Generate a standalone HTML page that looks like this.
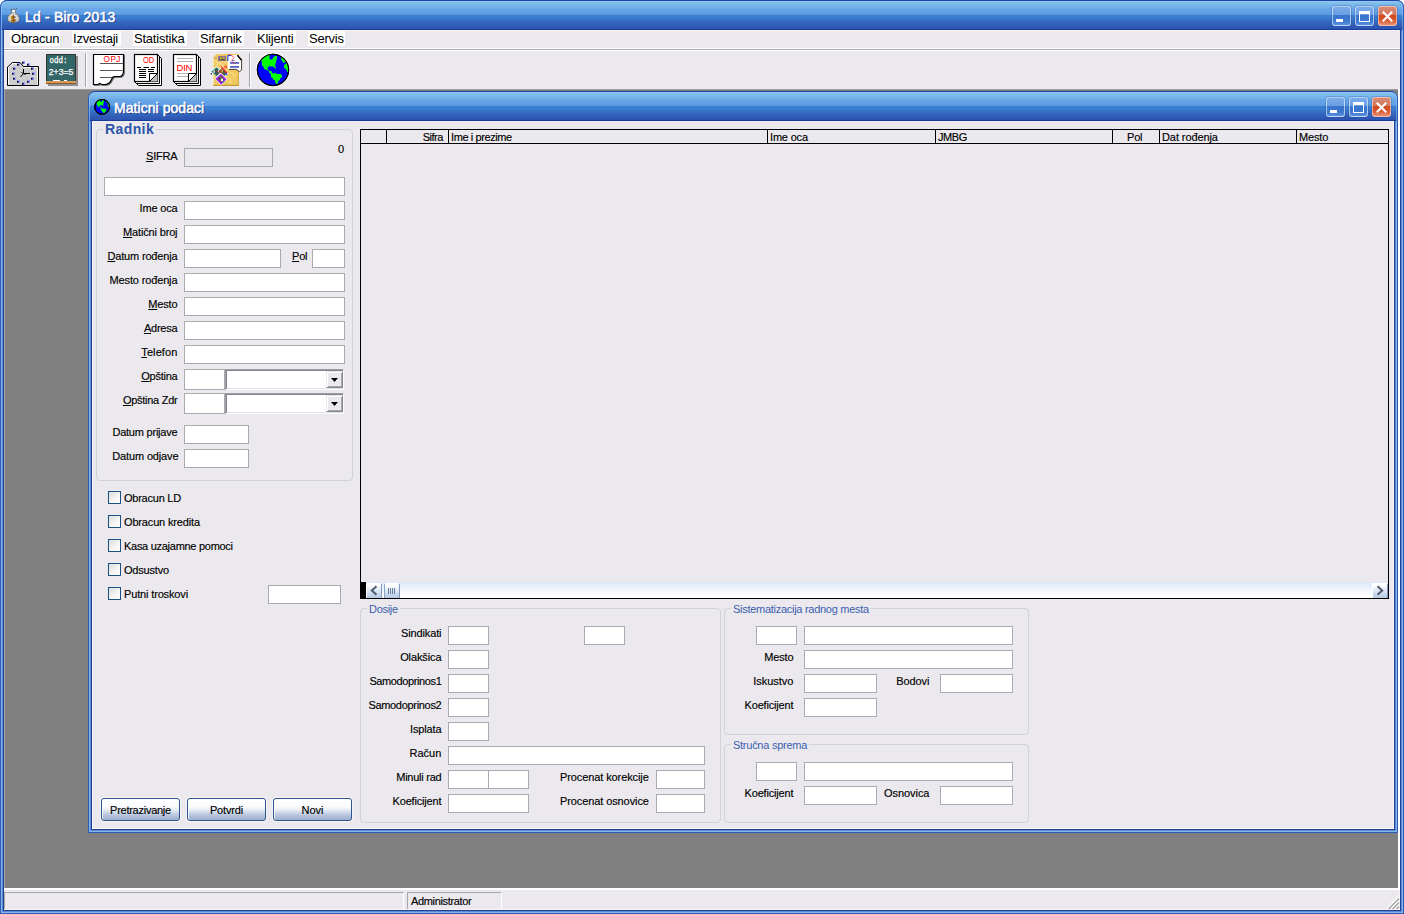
<!DOCTYPE html><html><head><meta charset="utf-8"><title>Ld - Biro 2013</title><style>
html,body{margin:0;padding:0;}
body{width:1404px;height:914px;overflow:hidden;position:relative;background:#fff;font-family:"Liberation Sans",sans-serif;font-size:11px;color:#000;}
div,span{position:absolute;box-sizing:border-box;white-space:nowrap;}
u{text-decoration:underline;}
.outer{left:0;top:0;width:1404px;height:914px;border-radius:7px 7px 0 0;overflow:hidden;background:#2c5bb8;}
.title{left:0;top:0;width:1404px;height:30px;background:linear-gradient(#1c3c9c 0px,#1c3c9c 1px,#9ccef4 1px,#84c2ee 2px,#7cbaea 4px,#74b2ea 7px,#66a6e8 9px,#62a2e6 12px,#5a98de 15px,#3a80d0 15px,#3a7cce 18px,#366ec4 21px,#3262ba 24px,#2e58b4 27px,#2a54b0 29px,#183c98 29px,#183c98 30px);border-radius:7px 7px 0 0;box-shadow:inset 1px 0 0 #2c5bb8,inset -1px 0 0 #2c5bb8,inset 0 1px 0 #1f43a4,inset 2px 0 0 rgba(160,208,248,.6),inset -2px 0 0 rgba(160,208,248,.45);}
.bl{width:1px;}

.tt{color:#fff;font-weight:normal;-webkit-text-stroke:0.55px #fff;font-size:14px;line-height:16px;letter-spacing:0.18px;text-shadow:1px 1px 0 #1a2f80;}
.inner{background:#ebe9ed;}
.lbl,.l,.hd,.btn{-webkit-text-stroke:0.15px #000;}
.lbl{height:13px;line-height:13px;font-size:11px;text-align:right;}
.l{height:13px;line-height:13px;font-size:11px;}
.in{background:#fff;border:1px solid #a9abb0;height:19px;}
.gb{border:1px solid #d2d1d3;border-radius:4px;}
.gl{background:#ebe9ed;color:#3c5eae;font-size:11px;line-height:13px;height:13px;padding:0 2px;}
.cb{width:13px;height:13px;border:1px solid #1c5180;background:linear-gradient(135deg,#dcdcd7,#f6f6f4 60%,#fff);}
.btn{height:23px;border:1px solid #2e5590;border-radius:3px;background:linear-gradient(#fff 0%,#fafbfd 35%,#e8ecf5 52%,#cdd7e8 65%,#b2c1db 80%,#9cb0d0 100%);box-shadow:0 0 0 1px rgba(255,255,255,.45),inset 1px 0 0 rgba(255,255,255,.8);text-align:center;line-height:21px;padding-top:1px;font-size:11px;}
.m{top:30px;height:16px;line-height:18px;font-size:13px;background:#fff;padding:0 1px;letter-spacing:-0.22px;overflow:hidden;}
.wb{width:19px;height:20px;border:1px solid rgba(235,245,255,.62);border-radius:3px;background:linear-gradient(#7cacea 0%,#6a9fe4 42%,#3a74cc 46%,#3c78d0 75%,#5a8fdc 100%);box-shadow:0 0 0 1px rgba(30,60,150,.22);}
.wc{border-color:rgba(255,225,215,.6);background:linear-gradient(#d88a74 0%,#d27a60 42%,#d04a1e 46%,#d8542a 70%,#e89274 100%);}
.hd{top:131px;height:12px;line-height:12px;font-size:11px;}
.vs{top:130px;width:1px;height:13px;background:#000;}
</style></head><body>
<div class="outer">
<div class="title"></div>
<svg width="30" height="30" style="position:absolute;left:0;top:0"><path d="M10.5 9 L12.5 11 L11.5 13 Q7.5 15.5 7.5 19 Q7.5 22.5 13.5 22.5 Q19.5 22.5 19.5 19 Q19.5 15.5 15.5 13 L14.8 11 L16.5 8.5 L14 10 L13 9 L12 10 Z" fill="#c8c8c8" stroke="#5a4a3a" stroke-width="0.9" stroke-dasharray="1.2,0.8"/><ellipse cx="13.5" cy="18" rx="3.4" ry="3.6" fill="#e8e8e8"/><rect x="12.4" y="10" width="2.4" height="2" fill="#fff"/><text x="11" y="21.6" font-family="Liberation Sans,sans-serif" font-weight="bold" font-size="8.5" fill="#f0c000" stroke="#7a3a00" stroke-width="0.5">$</text></svg>
<div class="tt" style="left:25px;top:9px;">Ld - Biro 2013</div>
<div class="wb" style="left:1332px;top:6px;"><svg width="17" height="18" style="position:absolute;left:0;top:0"><rect x="3" y="12" width="7" height="3" fill="#fff"/></svg></div><div class="wb" style="left:1355px;top:6px;"><svg width="17" height="18" style="position:absolute;left:0;top:0"><rect x="3.5" y="4.5" width="10" height="10" fill="none" stroke="#fff" stroke-width="1"/><rect x="3" y="4" width="11" height="3" fill="#fff"/></svg></div><div class="wb wc" style="left:1378px;top:6px;"><svg width="17" height="18" style="position:absolute;left:0;top:0"><path d="M3.8 4.8 L13.2 14.2 M13.2 4.8 L3.8 14.2" stroke="#fff" stroke-width="2.1" fill="none"/></svg></div>
<div style="left:4px;top:30px;width:1396px;height:880px;background:#ebe9ed;"></div>
<div style="left:0px;top:30px;width:1px;height:884px;background:#2c5bb8;"></div><div style="left:1403px;top:30px;width:1px;height:884px;background:#2c5bb8;"></div><div style="left:0px;top:913px;width:1404px;height:1px;background:#2c5bb8;"></div><div style="left:1px;top:30px;width:1px;height:883px;background:#86b5e6;"></div><div style="left:1402px;top:30px;width:1px;height:883px;background:#86b5e6;"></div><div style="left:1px;top:912px;width:1402px;height:1px;background:#86b5e6;"></div><div style="left:2px;top:30px;width:1px;height:882px;background:#5a8ad4;"></div><div style="left:1401px;top:30px;width:1px;height:882px;background:#5a8ad4;"></div><div style="left:2px;top:911px;width:1400px;height:1px;background:#5a8ad4;"></div><div style="left:3px;top:30px;width:1px;height:881px;background:#223f96;"></div><div style="left:1400px;top:30px;width:1px;height:881px;background:#223f96;"></div><div style="left:3px;top:910px;width:1398px;height:1px;background:#223f96;"></div>
<div class="m" style="left:10px;width:50px;">Obracun</div>
<div class="m" style="left:72px;width:49px;">Izvestaji</div>
<div class="m" style="left:133px;width:54px;">Statistika</div>
<div class="m" style="left:199px;width:45px;">Sifarnik</div>
<div class="m" style="left:256px;width:40px;">Klijenti</div>
<div class="m" style="left:308px;width:37px;">Servis</div>
<div style="left:4px;top:30px;width:1396px;height:1px;background:#f7f3f4;"></div>
<div style="left:4px;top:48px;width:1396px;height:1px;background:#fff;"></div>
<div style="left:4px;top:49px;width:1396px;height:1px;background:#a7a6aa;"></div>
<div style="left:4px;top:50px;width:1396px;height:1px;background:#fff;"></div>
<svg width="400" height="90" style="position:absolute;left:0;top:0"><polygon points="7.5,85.5 7.5,67 12.5,62.5 20,62.5 23.5,66.5 38.5,66.5 38.5,85.5" fill="#cdcdcd" stroke="#000" stroke-width="1"/><path d="M8.5 84.5 V67.5 L13 63.5 H19.5" fill="none" stroke="#fff" stroke-width="1"/><path d="M24 67.5 H37.5" stroke="#fff" stroke-width="1"/><path d="M37.5 68 V84.5" stroke="#f4f4e2" stroke-width="1"/><rect x="22" y="61" width="3" height="3" fill="#9c9cff"/><rect x="22" y="62" width="1.6" height="1.6" fill="#000"/><rect x="27" y="63" width="3" height="3" fill="#9c9cff"/><rect x="27" y="64" width="1.6" height="1.6" fill="#000"/><rect x="31" y="67" width="3" height="3" fill="#9c9cff"/><rect x="31" y="68" width="1.6" height="1.6" fill="#000"/><rect x="32" y="72" width="3" height="3" fill="#9c9cff"/><rect x="32" y="73" width="1.6" height="1.6" fill="#000"/><rect x="31" y="77" width="3" height="3" fill="#9c9cff"/><rect x="31" y="78" width="1.6" height="1.6" fill="#000"/><rect x="27" y="80" width="3" height="3" fill="#9c9cff"/><rect x="27" y="81" width="1.6" height="1.6" fill="#000"/><rect x="22" y="82" width="3" height="3" fill="#9c9cff"/><rect x="22" y="83" width="1.6" height="1.6" fill="#000"/><rect x="17" y="80" width="3" height="3" fill="#9c9cff"/><rect x="17" y="81" width="1.6" height="1.6" fill="#000"/><rect x="13" y="77" width="3" height="3" fill="#9c9cff"/><rect x="13" y="78" width="1.6" height="1.6" fill="#000"/><rect x="12" y="72" width="3" height="3" fill="#9c9cff"/><rect x="12" y="73" width="1.6" height="1.6" fill="#000"/><rect x="13" y="67" width="3" height="3" fill="#9c9cff"/><rect x="13" y="68" width="1.6" height="1.6" fill="#000"/><rect x="17" y="63" width="3" height="3" fill="#9c9cff"/><rect x="17" y="64" width="1.6" height="1.6" fill="#000"/><path d="M23.5 73.5 H30 M23.5 73.5 L20.5 77 M23.5 73.5 V69 M21.5 72.5 L25.5 74.5" stroke="#000" stroke-width="1" fill="none"/><rect x="48" y="56" width="30" height="30" fill="#8f8f8f"/><rect x="46.5" y="54.5" width="29" height="29" fill="#336666" stroke="#333" stroke-width="1"/><rect x="46" y="81" width="30" height="2" fill="#d89a58"/><rect x="46" y="83" width="30" height="1" fill="#8a5a2a"/><rect x="53" y="80" width="7" height="1" fill="#fff"/><rect x="64" y="80" width="3" height="1" fill="#fff"/><text x="49.5" y="62.5" font-family="Liberation Mono,monospace" font-size="8.5" fill="#fff" stroke="#fff" stroke-width="0.25" textLength="18" lengthAdjust="spacingAndGlyphs">odd:</text><text x="48.8" y="74.6" font-family="Liberation Sans,sans-serif" font-size="9" fill="#fff" stroke="#fff" stroke-width="0.25" textLength="24.5" lengthAdjust="spacingAndGlyphs">2+3=5</text><rect x="85" y="53" width="1" height="34" fill="#a3a2a6"/><rect x="86" y="53" width="1" height="34" fill="#fff"/><rect x="249" y="53" width="1" height="34" fill="#a3a2a6"/><rect x="250" y="53" width="1" height="34" fill="#fff"/><path d="M93.5 54.5 H123.5 V71 Q123.5 76 119.5 76.5 H114.5 Q112.5 76.5 111.5 79.5 Q109.5 84.5 105 84.5 H102 L99.5 83.5 L98 84.5 H93.5 Z" fill="#777" stroke="#777" stroke-width="1.2" transform="translate(0.9,0.9)"/><path d="M93.5 54.5 H123.5 V71 Q123.5 76 119.5 76.5 H114.5 Q112.5 76.5 111.5 79.5 Q109.5 84.5 105 84.5 H102 L99.5 83.5 L98 84.5 H93.5 Z" fill="#fff" stroke="#000" stroke-width="1.2"/><path d="M100 63.5 H123 M100 70.5 H122.5 M100 77.5 H112" stroke="#555" stroke-width="1"/><text x="103.6" y="62.2" font-family="Liberation Sans,sans-serif" font-size="8.2" fill="#ff0000" textLength="16.8" lengthAdjust="spacing">OPJ</text><path d="M157.5 54.5 L161.5 58.5 V85.5 H138.5 L134.5 81.5" fill="#fff" stroke="#000" stroke-width="1"/><path d="M159.5 56.5 V83.5 H136.5" fill="none" stroke="#000" stroke-width="1"/><rect x="134.5" y="54.5" width="23.0" height="27" fill="#fff" stroke="#000" stroke-width="1.2"/><polygon points="149.5,81.5 157.5,73.5 157.5,81.5" fill="#c0c0c0"/><path d="M149.5 81.5 V73.5 H157.5 M149.5 81.5 L157.5 73.5" fill="none" stroke="#000" stroke-width="1"/><text x="143" y="63" font-family="Liberation Sans,sans-serif" font-size="8.2" fill="#ff0000" textLength="11.2" lengthAdjust="spacingAndGlyphs">OD</text><path d="M137 67.5 H141 M143.5 67.5 H149 M151 67.5 H155" stroke="#000" stroke-width="1"/><path d="M139 69.5 H146 M139 71.5 H146 M139 73.5 H146 M139 75.5 H146 M139 77.5 H146 M148 69.5 H154 M148 71.5 H154" stroke="#000" stroke-width="1"/><path d="M196.5 54.5 L200.5 58.5 V85.5 H177.5 L173.5 81.5" fill="#fff" stroke="#000" stroke-width="1"/><path d="M198.5 56.5 V83.5 H175.5" fill="none" stroke="#000" stroke-width="1"/><rect x="173.5" y="54.5" width="23.0" height="27" fill="#fff" stroke="#000" stroke-width="1.2"/><polygon points="188.5,81.5 196.5,73.5 196.5,81.5" fill="#c0c0c0"/><path d="M188.5 81.5 V73.5 H196.5 M188.5 81.5 L196.5 73.5" fill="none" stroke="#000" stroke-width="1"/><path d="M177 58.5 H193 M177 61.5 H193 M177 73.5 H188 M177 76.5 H188" stroke="#b4b4b4" stroke-width="1"/><text x="176.6" y="70.6" font-family="Liberation Sans,sans-serif" font-size="9.6" fill="#ff0000" textLength="15.8" lengthAdjust="spacing">DIN</text><path d="M213 57.5 L216.5 54 H238.9 V86 H213 Z" fill="#f0c862"/><path d="M213 85.4 H238.9" stroke="#c49a38" stroke-width="1.2"/><path d="M238.4 71 V86" stroke="#d4a844" stroke-width="1"/><path d="M213.5 58 V85" stroke="#f8e6a0" stroke-width="1"/><path d="M215 60.5 L219 64 L223 60.5 L227 64 M216 66 L220 62.5 L224 66" stroke="#f6dc88" stroke-width="1.2" fill="none"/><path d="M226 76 h2 v2 h2 v2 h2 M230 73 h3 v3 h3 M228 82 h4" stroke="#f8e07c" stroke-width="1" fill="none"/><rect x="214.5" y="57.5" width="2.5" height="1" fill="#b09a70"/><rect x="218" y="56" width="8" height="5" fill="#9070a4"/><rect x="219.5" y="57" width="5.5" height="3.4" fill="#5a5230"/><rect x="220" y="57.3" width="1.6" height="2" fill="#e8d020"/><rect x="222.5" y="57.3" width="2.2" height="1.4" fill="#f0e060"/><path d="M227.8 55 H237.2 L241.6 60.2 V70 L239.5 71.6 L236 69.2 H227.8 Z" fill="#fff"/><path d="M237.2 55 L241.6 60.2 V70 L239.5 71.6 L236 69.4 H229" fill="none" stroke="#4a3c28" stroke-width="1"/><path d="M237.4 55.2 L241.6 60.2" stroke="#000" stroke-width="1.4"/><path d="M227.5 55.5 H231.5 M227.8 55.5 V61" stroke="#2050e0" stroke-width="1.2" fill="none"/><rect x="230" y="62" width="9" height="1.8" fill="#5464c4"/><rect x="230" y="66" width="9" height="1.8" fill="#5464c4"/><rect x="232" y="60" width="2.6" height="0.9" fill="#5464c4"/><path d="M228.5 54.2 L231.5 55.4 L234.4 57.4 L231.3 60.6 L233.4 62.8 L235.4 63.4" stroke="#ff2020" stroke-width="0.9" fill="none" stroke-dasharray="1.4,0.5"/><polygon points="210.6,71.2 216.5,66.2 222.2,71.2 216.5,76.6" fill="#fff"/><polygon points="211.4,71.6 216.6,67.2 221.5,71.6 216.6,76.2" fill="#1c7a74"/><polygon points="213.8,71.6 216.8,69.2 219.6,71.8 216.8,74.6" fill="#584a3c"/><rect x="213.4" y="70.2" width="1.6" height="2.6" fill="#d8d8d0"/><rect x="210.8" y="73.2" width="1.2" height="1.2" fill="#000"/><polygon points="217.6,71 222.4,66.2 228.6,73.2 224,77.6" fill="#fff"/><polygon points="218.6,71.2 222.4,67.4 227.4,73.2 223.8,76.6" fill="#6a5a38"/><path d="M221.2 66.6 L227.2 73.2" stroke="#ff2020" stroke-width="1.3"/><circle cx="225.6" cy="67" r="1.1" fill="none" stroke="#ff2020" stroke-width="0.8"/><rect x="225.2" y="73.4" width="2" height="1.8" fill="#2060f0"/><rect x="219.4" y="70.4" width="1.2" height="2.4" fill="#d02020"/><rect x="221.6" y="69.4" width="1.2" height="3" fill="#e0c040"/><rect x="223.4" y="71" width="1.2" height="3" fill="#2a6a50"/><polygon points="214.6,78.6 220.8,72.8 227.6,79.2 221.2,85.6" fill="#fff"/><polygon points="215.4,78.8 220.8,73.8 226.6,79.2 221.2,84.8" fill="#a020f0"/><polygon points="217.8,78.8 221,75.8 224.6,79.4 221.2,82.6" fill="#4c4638"/><rect x="220.8" y="78.6" width="2.2" height="2.6" fill="#fff"/><rect x="223" y="81.4" width="1.4" height="1.4" fill="#20d060"/><rect x="219.6" y="76.6" width="1.6" height="1.2" fill="#8a7a50"/><circle cx="273.0" cy="69.9" r="17.1" fill="#fff"/><circle cx="273.0" cy="69.9" r="15.7" fill="#0000ff" stroke="#000" stroke-width="1"/><polygon points="260.8,60.9 265.0,56.6 269.2,54.6 269.8,55.7 269.2,57.9 270.3,59.6 272.4,59.4 273.1,57.4 275.1,56.1 277.0,55.9 277.0,58.8 276.2,60.5 275.9,63.1 275.2,64.4 275.2,66.8 276.2,67.7 275.6,68.8 274.2,67.5 272.4,66.2 270.7,66.8 269.4,65.3 269.2,67.1 267.2,67.3 268.1,68.8 267.9,70.1 270.3,71.0 272.0,71.4 272.0,72.8 273.3,73.6 275.5,73.0 277.3,73.9 280.8,73.9 282.1,75.8 281.9,77.6 280.3,78.0 279.9,79.8 277.9,81.5 277.7,83.7 276.4,83.9 275.1,81.9 275.1,80.2 273.1,79.8 272.9,78.0 271.1,77.6 270.9,73.9 269.2,72.8 268.9,71.0 266.8,70.1 263.9,68.8 263.7,67.1 261.9,65.3 261.9,61.4" fill="#00ff00"/><polygon points="281.0,57.0 283.6,59.0 286.2,61.6 285.1,62.3 283.4,62.9 282.1,60.9 281.2,59.6" fill="#00ff00"/><polygon points="286.7,63.1 287.8,64.4 288.1,71.9 287.1,71.9 286.7,70.1 284.0,67.5 284.0,65.3 285.6,64.0" fill="#00ff00"/><circle cx="273.0" cy="69.9" r="15.7" fill="none" stroke="#000" stroke-width="1.1"/></svg>
<div style="left:4px;top:89px;width:1394px;height:799px;background:#808080;border-left:1px solid #a8a8a8;border-top:1px solid #9c9c9c;"></div>
<div style="left:1398px;top:89px;width:2px;height:801px;background:#fff;"></div>
<div style="left:4px;top:888px;width:1396px;height:2px;background:#fff;"></div>
<div style="left:4px;top:890px;width:1395px;height:20px;background:#ebe9ed;"></div>
<div style="left:1399px;top:890px;width:1px;height:20px;background:#fbf6f4;"></div>
<div style="left:4px;top:909px;width:1396px;height:1px;background:#fbf6f4;"></div>
<div style="left:4px;top:892px;width:400px;height:17px;border-top:1px solid #a7a6aa;border-left:1px solid #a7a6aa;border-right:1px solid #fff;"></div>
<div style="left:407px;top:892px;width:95px;height:17px;border-top:1px solid #a7a6aa;border-left:1px solid #a7a6aa;border-right:1px solid #fff;"></div>
<div class="l" style="left:411px;top:895px;letter-spacing:-0.35px;">Administrator</div>
<svg width="14" height="14" style="position:absolute;left:1386px;top:896px"><path d="M1.3 12.3 L12.3 1.3 M5.5 12.3 L12.3 5.5 M9.5 12.3 L12.3 9.5" stroke="#fff" stroke-width="1.4" fill="none"/><path d="M2.5 13 L13 2.5 M6.6 13 L13 6.6 M10.6 13 L13 10.6" stroke="#a3a2a6" stroke-width="1.4" fill="none"/></svg>
<div style="left:88px;top:91px;width:1310px;height:30px;border-radius:7px 7px 0 0;overflow:hidden;"><div class="title" style="width:1310px;"></div></div>
<div style="left:92px;top:121px;width:1302px;height:708px;background:#ebe9ed;border:1px solid #fbf8f6;border-top:none;"></div>
<div style="left:88px;top:121px;width:1px;height:712px;background:#2c5bb8;"></div><div style="left:1397px;top:121px;width:1px;height:712px;background:#2c5bb8;"></div><div style="left:88px;top:832px;width:1310px;height:1px;background:#2c5bb8;"></div><div style="left:89px;top:121px;width:1px;height:711px;background:#86b5e6;"></div><div style="left:1396px;top:121px;width:1px;height:711px;background:#86b5e6;"></div><div style="left:89px;top:831px;width:1308px;height:1px;background:#86b5e6;"></div><div style="left:90px;top:121px;width:1px;height:710px;background:#5a8ad4;"></div><div style="left:1395px;top:121px;width:1px;height:710px;background:#5a8ad4;"></div><div style="left:90px;top:830px;width:1306px;height:1px;background:#5a8ad4;"></div><div style="left:91px;top:121px;width:1px;height:709px;background:#223f96;"></div><div style="left:1394px;top:121px;width:1px;height:709px;background:#223f96;"></div><div style="left:91px;top:829px;width:1304px;height:1px;background:#223f96;"></div>
<svg width="30" height="30" style="position:absolute;left:88px;top:91px"><circle cx="14.1" cy="15.9" r="7.4" fill="#0000ff" stroke="#000" stroke-width="1"/><polygon points="8.2,11.5 10.2,9.4 12.2,8.4 12.5,9.0 12.2,10.0 12.8,10.9 13.8,10.8 14.2,9.8 15.1,9.2 16.1,9.1 16.1,10.5 15.6,11.3 15.5,12.6 15.2,13.2 15.2,14.4 15.6,14.8 15.4,15.4 14.7,14.7 13.8,14.1 13.0,14.4 12.3,13.7 12.2,14.5 11.3,14.6 11.7,15.4 11.6,16.0 12.8,16.4 13.6,16.7 13.6,17.3 14.3,17.7 15.3,17.4 16.2,17.8 17.9,17.8 18.5,18.8 18.4,19.6 17.7,19.9 17.5,20.7 16.5,21.6 16.4,22.6 15.8,22.7 15.1,21.8 15.1,20.9 14.2,20.7 14.0,19.9 13.2,19.6 13.1,17.8 12.2,17.3 12.1,16.4 11.1,16.0 9.7,15.4 9.6,14.5 8.7,13.7 8.7,11.7" fill="#00ff00"/><polygon points="18.0,9.6 19.3,10.6 20.6,11.9 20.0,12.2 19.2,12.5 18.5,11.5 18.1,10.9" fill="#00ff00"/><polygon points="20.8,12.6 21.3,13.2 21.5,16.9 21.0,16.9 20.8,16.0 19.5,14.7 19.5,13.7 20.2,13.0" fill="#00ff00"/><circle cx="14.1" cy="15.9" r="7.4" fill="none" stroke="#000" stroke-width="1.1"/></svg>
<div class="tt" style="left:114px;top:100px;letter-spacing:0.05px;">Maticni podaci</div>
<div class="wb" style="left:1326px;top:97px;"><svg width="17" height="18" style="position:absolute;left:0;top:0"><rect x="3" y="12" width="7" height="3" fill="#fff"/></svg></div><div class="wb" style="left:1349px;top:97px;"><svg width="17" height="18" style="position:absolute;left:0;top:0"><rect x="3.5" y="4.5" width="10" height="10" fill="none" stroke="#fff" stroke-width="1"/><rect x="3" y="4" width="11" height="3" fill="#fff"/></svg></div><div class="wb wc" style="left:1372px;top:97px;"><svg width="17" height="18" style="position:absolute;left:0;top:0"><path d="M3.8 4.8 L13.2 14.2 M13.2 4.8 L3.8 14.2" stroke="#fff" stroke-width="2.1" fill="none"/></svg></div>
<div class="gb" style="left:96px;top:129px;width:257px;height:352px;"></div>
<div style="left:103px;top:121px;height:16px;line-height:16px;font-size:14px;font-weight:bold;letter-spacing:0.4px;color:#2c54a8;background:#ebe9ed;padding:0 2px;">Radnik</div>
<div class="lbl" style="right:1226.6px;top:150px;letter-spacing:-0.22px;"><u>S</u>IFRA</div>
<div class="in" style="left:184px;top:148px;width:89px;height:19px;background:#ebe9ed;"></div>
<div class="l" style="left:338px;top:143px;letter-spacing:-0.15px;">0</div>
<div class="in" style="left:104px;top:177px;width:241px;height:19px;"></div>
<div class="lbl" style="right:1226.6px;top:202px;letter-spacing:-0.18px;">Ime oca</div>
<div class="lbl" style="right:1226.6px;top:226px;letter-spacing:-0.16px;"><u>M</u>atični broj</div>
<div class="lbl" style="right:1226.6px;top:250px;letter-spacing:-0.17px;"><u>D</u>atum rođenja</div>
<div class="lbl" style="right:1226.6px;top:274px;letter-spacing:-0.14px;">Mesto rođenja</div>
<div class="lbl" style="right:1226.6px;top:298px;letter-spacing:-0.17px;"><u>M</u>esto</div>
<div class="lbl" style="right:1226.6px;top:322px;letter-spacing:-0.23px;"><u>A</u>dresa</div>
<div class="lbl" style="right:1226.6px;top:346px;letter-spacing:0.09px;"><u>T</u>elefon</div>
<div class="lbl" style="right:1226.6px;top:370px;letter-spacing:-0.26px;"><u>O</u>pština</div>
<div class="lbl" style="right:1226.6px;top:394px;letter-spacing:-0.27px;"><u>O</u>pština Zdr</div>
<div class="in" style="left:184px;top:201px;width:161px;height:19px;"></div>
<div class="in" style="left:184px;top:225px;width:161px;height:19px;"></div>
<div class="in" style="left:184px;top:273px;width:161px;height:19px;"></div>
<div class="in" style="left:184px;top:297px;width:161px;height:19px;"></div>
<div class="in" style="left:184px;top:321px;width:161px;height:19px;"></div>
<div class="in" style="left:184px;top:345px;width:161px;height:19px;"></div>
<div class="in" style="left:184px;top:249px;width:97px;height:19px;"></div>
<div class="l" style="left:292px;top:250px;letter-spacing:-0.20px;"><u>P</u>ol</div>
<div class="in" style="left:312px;top:249px;width:33px;height:19px;"></div>
<div class="in" style="left:184px;top:369px;width:41px;height:21px;"></div>
<div style="left:225px;top:369px;width:119px;height:21px;background:#fff;border-top:1px solid #9c9ca4;border-left:1px solid #9c9ca4;border-right:1px solid #fff;border-bottom:1px solid #fff;box-shadow:inset 1px 1px 0 #85858d,inset 0 -1px 0 #dde3ea;"></div><div style="left:326px;top:371px;width:17px;height:17px;background:#ebe9ed;border-top:1px solid #e4e8ee;border-left:1px solid #e4e8ee;border-right:1px solid #85858d;border-bottom:1px solid #85858d;box-shadow:inset 1px 1px 0 #fff,inset -1px -1px 0 #a8a8b0;"></div><svg width="9" height="6" style="position:absolute;left:331px;top:378px"><polygon points="0,0 7,0 3.5,4" fill="#000"/></svg>
<div class="in" style="left:184px;top:393px;width:41px;height:21px;"></div>
<div style="left:225px;top:393px;width:119px;height:21px;background:#fff;border-top:1px solid #9c9ca4;border-left:1px solid #9c9ca4;border-right:1px solid #fff;border-bottom:1px solid #fff;box-shadow:inset 1px 1px 0 #85858d,inset 0 -1px 0 #dde3ea;"></div><div style="left:326px;top:395px;width:17px;height:17px;background:#ebe9ed;border-top:1px solid #e4e8ee;border-left:1px solid #e4e8ee;border-right:1px solid #85858d;border-bottom:1px solid #85858d;box-shadow:inset 1px 1px 0 #fff,inset -1px -1px 0 #a8a8b0;"></div><svg width="9" height="6" style="position:absolute;left:331px;top:402px"><polygon points="0,0 7,0 3.5,4" fill="#000"/></svg>
<div class="lbl" style="right:1226.6px;top:426px;letter-spacing:-0.22px;">Datum prijave</div>
<div class="lbl" style="right:1225.6px;top:450px;letter-spacing:-0.15px;">Datum odjave</div>
<div class="in" style="left:184px;top:425px;width:65px;height:19px;"></div>
<div class="in" style="left:184px;top:449px;width:65px;height:19px;"></div>
<div class="cb" style="left:108px;top:491px;"></div>
<div class="l" style="left:124px;top:492px;letter-spacing:-0.24px;">Obracun LD</div>
<div class="cb" style="left:108px;top:515px;"></div>
<div class="l" style="left:124px;top:516px;letter-spacing:-0.16px;">Obracun kredita</div>
<div class="cb" style="left:108px;top:539px;"></div>
<div class="l" style="left:124px;top:540px;letter-spacing:-0.28px;">Kasa uzajamne pomoci</div>
<div class="cb" style="left:108px;top:563px;"></div>
<div class="l" style="left:124px;top:564px;letter-spacing:-0.20px;">Odsustvo</div>
<div class="cb" style="left:108px;top:587px;"></div>
<div class="l" style="left:124px;top:588px;letter-spacing:-0.15px;">Putni troskovi</div>
<div class="in" style="left:268px;top:585px;width:73px;height:19px;"></div>
<div class="btn" style="left:101px;top:798px;width:79px;letter-spacing:-0.26px;">Pretrazivanje</div>
<div class="btn" style="left:187px;top:798px;width:79px;letter-spacing:-0.15px;">Potvrdi</div>
<div class="btn" style="left:273px;top:798px;width:79px;letter-spacing:0.00px;">Novi</div>
<div style="left:360px;top:129px;width:1029px;height:470px;border:1px solid #000;"></div>
<div style="left:361px;top:143px;width:1027px;height:1px;background:#000;"></div>
<div class="vs" style="left:386px;"></div>
<div class="vs" style="left:448px;"></div>
<div class="vs" style="left:767px;"></div>
<div class="vs" style="left:935px;"></div>
<div class="vs" style="left:1112px;"></div>
<div class="vs" style="left:1159px;"></div>
<div class="vs" style="left:1296px;"></div>
<div class="hd" style="right:961px;letter-spacing:-0.45px;">Sifra</div>
<div class="hd" style="left:451px;letter-spacing:-0.40px;">Ime i prezime</div>
<div class="hd" style="left:770px;letter-spacing:-0.18px;">Ime oca</div>
<div class="hd" style="left:938px;letter-spacing:-0.44px;">JMBG</div>
<div class="hd" style="left:1127px;letter-spacing:-0.20px;">Pol</div>
<div class="hd" style="left:1162px;letter-spacing:-0.09px;">Dat rođenja</div>
<div class="hd" style="left:1299px;letter-spacing:-0.17px;">Mesto</div>
<div style="left:361px;top:582px;width:1027px;height:16px;background:linear-gradient(#dbe8fa,#eef4fd 45%,#fff 90%);"></div>
<div style="left:360px;top:582px;width:6px;height:17px;background:#000;"></div>
<div style="left:366px;top:583px;width:16px;height:15px;border:1px solid #fff;border-right:1px solid #8196b8;border-bottom:none;border-radius:2px 2px 0 0;background:linear-gradient(#fff 10%,#dfe8f5 45%,#b6c9e3 100%);"></div>
<div style="left:1372px;top:583px;width:16px;height:15px;border:1px solid #fff;border-right:1px solid #8196b8;border-bottom:none;border-radius:2px 2px 0 0;background:linear-gradient(#fff 10%,#dfe8f5 45%,#b6c9e3 100%);"></div>
<svg width="16" height="16" style="position:absolute;left:366px;top:582px"><path d="M10.5 4.2 L5.8 8.5 L10.5 12.8" fill="none" stroke="#4d5d70" stroke-width="2"/></svg>
<svg width="16" height="16" style="position:absolute;left:1372px;top:582px"><path d="M5.5 4.2 L10.2 8.5 L5.5 12.8" fill="none" stroke="#4d5d70" stroke-width="2"/></svg>
<div style="left:384px;top:583px;width:16px;height:15px;border:1px solid #fff;border-right:1px solid #8196b8;border-left:1px solid #8fa3c2;border-bottom:none;border-radius:2px 2px 0 0;background:linear-gradient(#fff 10%,#dfe8f5 45%,#b6c9e3 100%);"></div>
<div style="left:388px;top:588px;width:1px;height:6px;background:#6c7f9c;"></div>
<div style="left:390px;top:588px;width:1px;height:6px;background:#6c7f9c;"></div>
<div style="left:392px;top:588px;width:1px;height:6px;background:#6c7f9c;"></div>
<div style="left:394px;top:588px;width:1px;height:6px;background:#6c7f9c;"></div>
<div class="gb" style="left:360px;top:608px;width:361px;height:215px;"></div>
<div class="gl" style="left:367px;top:603px;letter-spacing:-0.29px;">Dosije</div>
<div class="lbl" style="right:962.6px;top:627px;letter-spacing:-0.13px;">Sindikati</div>
<div class="lbl" style="right:962.6px;top:651px;letter-spacing:-0.12px;">Olakšica</div>
<div class="lbl" style="right:962.6px;top:675px;letter-spacing:-0.39px;">Samodoprinos1</div>
<div class="lbl" style="right:962.6px;top:699px;letter-spacing:-0.31px;">Samodoprinos2</div>
<div class="lbl" style="right:962.6px;top:723px;letter-spacing:-0.16px;">Isplata</div>
<div class="lbl" style="right:962.6px;top:747px;letter-spacing:0.02px;">Račun</div>
<div class="lbl" style="right:962.6px;top:771px;letter-spacing:-0.25px;">Minuli rad</div>
<div class="lbl" style="right:962.6px;top:795px;letter-spacing:-0.17px;">Koeficijent</div>
<div class="in" style="left:448px;top:626px;width:41px;height:19px;"></div>
<div class="in" style="left:448px;top:650px;width:41px;height:19px;"></div>
<div class="in" style="left:448px;top:674px;width:41px;height:19px;"></div>
<div class="in" style="left:448px;top:698px;width:41px;height:19px;"></div>
<div class="in" style="left:448px;top:722px;width:41px;height:19px;"></div>
<div class="in" style="left:584px;top:626px;width:41px;height:19px;"></div>
<div class="in" style="left:448px;top:746px;width:257px;height:19px;"></div>
<div class="in" style="left:448px;top:770px;width:41px;height:19px;"></div>
<div class="in" style="left:488px;top:770px;width:41px;height:19px;"></div>
<div class="in" style="left:448px;top:794px;width:81px;height:19px;"></div>
<div class="l" style="left:560px;top:771px;letter-spacing:-0.10px;">Procenat korekcije</div>
<div class="l" style="left:560px;top:795px;letter-spacing:-0.10px;">Procenat osnovice</div>
<div class="in" style="left:656px;top:770px;width:49px;height:19px;"></div>
<div class="in" style="left:656px;top:794px;width:49px;height:19px;"></div>
<div class="gb" style="left:724px;top:608px;width:305px;height:127px;"></div>
<div class="gl" style="left:731px;top:603px;letter-spacing:-0.28px;">Sistematizacija radnog mesta</div>
<div class="in" style="left:756px;top:626px;width:41px;height:19px;"></div>
<div class="in" style="left:804px;top:626px;width:209px;height:19px;"></div>
<div class="lbl" style="right:610.6px;top:651px;letter-spacing:-0.17px;">Mesto</div>
<div class="in" style="left:804px;top:650px;width:209px;height:19px;"></div>
<div class="lbl" style="right:610.6px;top:675px;letter-spacing:-0.02px;">Iskustvo</div>
<div class="in" style="left:804px;top:674px;width:73px;height:19px;"></div>
<div class="lbl" style="right:474.6px;top:675px;letter-spacing:-0.06px;">Bodovi</div>
<div class="in" style="left:940px;top:674px;width:73px;height:19px;"></div>
<div class="lbl" style="right:610.6px;top:699px;letter-spacing:-0.17px;">Koeficijent</div>
<div class="in" style="left:804px;top:698px;width:73px;height:19px;"></div>
<div class="gb" style="left:724px;top:744px;width:305px;height:79px;"></div>
<div class="gl" style="left:731px;top:739px;letter-spacing:-0.26px;">Stručna sprema</div>
<div class="in" style="left:756px;top:762px;width:41px;height:19px;"></div>
<div class="in" style="left:804px;top:762px;width:209px;height:19px;"></div>
<div class="lbl" style="right:610.6px;top:787px;letter-spacing:-0.17px;">Koeficijent</div>
<div class="in" style="left:804px;top:786px;width:73px;height:19px;"></div>
<div class="lbl" style="right:474.6px;top:787px;letter-spacing:-0.05px;">Osnovica</div>
<div class="in" style="left:940px;top:786px;width:73px;height:19px;"></div>
</div></body></html>
